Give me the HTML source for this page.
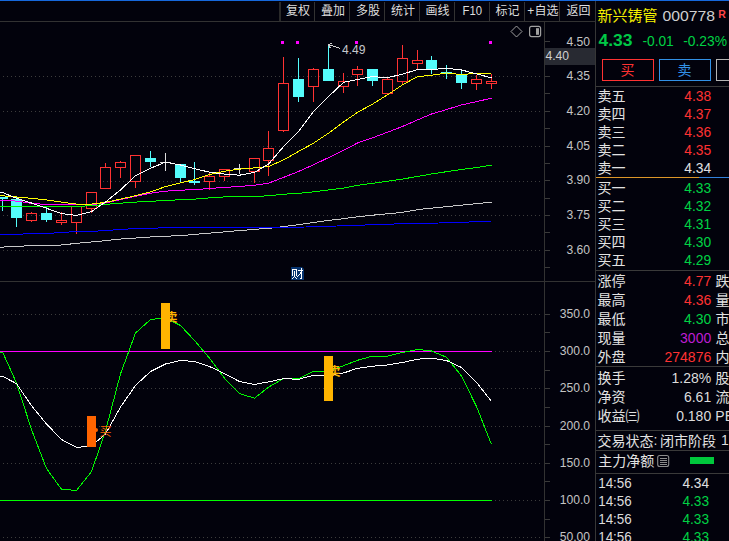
<!DOCTYPE html><html><head><meta charset="utf-8"><title>chart</title><style>html,body{margin:0;padding:0;background:#02020c;overflow:hidden}body{width:729px;height:541px;font-family:"Liberation Sans",sans-serif}</style></head><body><svg width="729" height="541" viewBox="0 0 729 541" font-family="'Liberation Sans', 'Noto Sans CJK SC', sans-serif" style="display:block"><defs><clipPath id="cpMain"><rect x="0" y="22" width="544" height="259"/></clipPath><clipPath id="cpInd"><rect x="0" y="282" width="544" height="259"/></clipPath></defs><rect width="729" height="541" fill="#02020c"/><rect x="0" y="0" width="729" height="1" fill="#1668dc"/>
<rect x="0" y="21" width="595" height="1" fill="#323232"/>
<rect x="279" y="2" width="2" height="19" fill="#2a2a2a"/>
<rect x="314" y="2" width="1" height="19" fill="#323232"/>
<rect x="349" y="2" width="1" height="19" fill="#323232"/>
<rect x="384" y="2" width="1" height="19" fill="#323232"/>
<rect x="419" y="2" width="1" height="19" fill="#323232"/>
<rect x="454" y="2" width="1" height="19" fill="#323232"/>
<rect x="489" y="2" width="1" height="19" fill="#323232"/>
<rect x="524" y="2" width="1" height="19" fill="#323232"/>
<rect x="559" y="2" width="1" height="19" fill="#323232"/>
<text x="286" y="15.3" font-size="12" fill="#dedede">复权</text>
<text x="321" y="15.3" font-size="12" fill="#dedede">叠加</text>
<text x="356" y="15.3" font-size="12" fill="#dedede">多股</text>
<text x="391" y="15.3" font-size="12" fill="#dedede">统计</text>
<text x="425.5" y="15.3" font-size="12" fill="#dedede">画线</text>
<text x="495.5" y="15.3" font-size="12" fill="#dedede">标记</text>
<text x="566.5" y="15.3" font-size="12" fill="#dedede">返回</text>
<text x="462.5" y="15.2" font-size="12" fill="#dedede" textLength="19.5" lengthAdjust="spacingAndGlyphs">F10</text>
<text x="527.3" y="15" font-size="12" fill="#dedede">+</text>
<text x="534.5" y="15.3" font-size="12" fill="#dedede">自选</text>
<rect x="544" y="21" width="1" height="520" fill="#323232"/>
<rect x="595" y="1" width="1" height="540" fill="#363636"/>
<rect x="0" y="281" width="595" height="1" fill="#323232"/>
<line x1="3" y1="76.5" x2="541" y2="76.5" stroke="#3c3c3c" stroke-width="1" stroke-dasharray="1 3" shape-rendering="crispEdges"/>
<line x1="3" y1="111.5" x2="541" y2="111.5" stroke="#3c3c3c" stroke-width="1" stroke-dasharray="1 3" shape-rendering="crispEdges"/>
<line x1="3" y1="146.5" x2="541" y2="146.5" stroke="#3c3c3c" stroke-width="1" stroke-dasharray="1 3" shape-rendering="crispEdges"/>
<line x1="3" y1="181.5" x2="541" y2="181.5" stroke="#3c3c3c" stroke-width="1" stroke-dasharray="1 3" shape-rendering="crispEdges"/>
<line x1="3" y1="215.5" x2="541" y2="215.5" stroke="#3c3c3c" stroke-width="1" stroke-dasharray="1 3" shape-rendering="crispEdges"/>
<line x1="3" y1="250.5" x2="541" y2="250.5" stroke="#3c3c3c" stroke-width="1" stroke-dasharray="1 3" shape-rendering="crispEdges"/>
<rect x="545" y="41" width="5" height="1" fill="#3a3a3a"/>
<rect x="545" y="76" width="5" height="1" fill="#3a3a3a"/>
<rect x="545" y="93" width="5" height="1" fill="#3a3a3a"/>
<rect x="545" y="111" width="5" height="1" fill="#3a3a3a"/>
<rect x="545" y="128" width="5" height="1" fill="#3a3a3a"/>
<rect x="545" y="146" width="5" height="1" fill="#3a3a3a"/>
<rect x="545" y="163" width="5" height="1" fill="#3a3a3a"/>
<rect x="545" y="180" width="5" height="1" fill="#3a3a3a"/>
<rect x="545" y="198" width="5" height="1" fill="#3a3a3a"/>
<rect x="545" y="215" width="5" height="1" fill="#3a3a3a"/>
<rect x="545" y="232" width="5" height="1" fill="#3a3a3a"/>
<rect x="545" y="250" width="5" height="1" fill="#3a3a3a"/>
<rect x="545" y="267" width="5" height="1" fill="#3a3a3a"/>
<text x="590" y="45.9" font-size="12.5" fill="#c4c4c4" text-anchor="end" textLength="23.6" lengthAdjust="spacingAndGlyphs">4.50</text>
<text x="590" y="80.1" font-size="12.5" fill="#c4c4c4" text-anchor="end" textLength="23.6" lengthAdjust="spacingAndGlyphs">4.35</text>
<text x="590" y="114.9" font-size="12.5" fill="#c4c4c4" text-anchor="end" textLength="23.6" lengthAdjust="spacingAndGlyphs">4.20</text>
<text x="590" y="149.6" font-size="12.5" fill="#c4c4c4" text-anchor="end" textLength="23.6" lengthAdjust="spacingAndGlyphs">4.05</text>
<text x="590" y="184.4" font-size="12.5" fill="#c4c4c4" text-anchor="end" textLength="23.6" lengthAdjust="spacingAndGlyphs">3.90</text>
<text x="590" y="219.1" font-size="12.5" fill="#c4c4c4" text-anchor="end" textLength="23.6" lengthAdjust="spacingAndGlyphs">3.75</text>
<text x="590" y="253.9" font-size="12.5" fill="#c4c4c4" text-anchor="end" textLength="23.6" lengthAdjust="spacingAndGlyphs">3.60</text>
<rect x="545" y="48" width="50" height="17" fill="#282a32"/>
<text x="545.5" y="60.2" font-size="12.5" fill="#d0d0d0" textLength="23.6" lengthAdjust="spacingAndGlyphs">4.40</text>
<g shape-rendering="crispEdges">
<rect x="2" y="197" width="1" height="14" fill="#54fcfc"/>
<rect x="-3" y="197" width="11" height="2" fill="#54fcfc"/>
<rect x="16" y="197" width="1" height="30" fill="#54fcfc"/>
<rect x="11" y="199" width="11" height="19" fill="#54fcfc"/>
<rect x="31" y="212" width="1" height="1" fill="#ff3232"/>
<rect x="31" y="221" width="1" height="1" fill="#ff3232"/>
<rect x="26.5" y="213.5" width="10" height="7" fill="none" stroke="#ff3232" stroke-width="1"/>
<rect x="46" y="207" width="1" height="15" fill="#54fcfc"/>
<rect x="41" y="213" width="11" height="7" fill="#54fcfc"/>
<rect x="61" y="212" width="1" height="8" fill="#ff3232"/>
<rect x="61" y="223" width="1" height="2" fill="#ff3232"/>
<rect x="56.5" y="220.5" width="10" height="2" fill="none" stroke="#ff3232" stroke-width="1"/>
<rect x="76" y="223" width="1" height="11" fill="#ff3232"/>
<rect x="71.5" y="206.5" width="10" height="16" fill="none" stroke="#ff3232" stroke-width="1"/>
<rect x="91" y="209" width="1" height="4" fill="#ff3232"/>
<rect x="86.5" y="192.5" width="10" height="16" fill="none" stroke="#ff3232" stroke-width="1"/>
<rect x="105" y="163" width="1" height="4" fill="#ff3232"/>
<rect x="100.5" y="167.5" width="10" height="21" fill="none" stroke="#ff3232" stroke-width="1"/>
<rect x="120" y="161" width="1" height="1" fill="#ff3232"/>
<rect x="120" y="168" width="1" height="10" fill="#ff3232"/>
<rect x="115.5" y="162.5" width="10" height="5" fill="none" stroke="#ff3232" stroke-width="1"/>
<rect x="135" y="182" width="1" height="6" fill="#ff3232"/>
<rect x="130.5" y="155.5" width="10" height="26" fill="none" stroke="#ff3232" stroke-width="1"/>
<rect x="150" y="151" width="1" height="16" fill="#54fcfc"/>
<rect x="145" y="158" width="11" height="4" fill="#54fcfc"/>
<rect x="165" y="153" width="1" height="18" fill="#dcdcdc"/>
<rect x="160" y="162" width="11" height="1" fill="#dcdcdc"/>
<rect x="180" y="164" width="1" height="19" fill="#54fcfc"/>
<rect x="175" y="164" width="11" height="14" fill="#54fcfc"/>
<rect x="194" y="162" width="1" height="23" fill="#54fcfc"/>
<rect x="189" y="181" width="11" height="2" fill="#54fcfc"/>
<rect x="209" y="173" width="1" height="3" fill="#ff3232"/>
<rect x="209" y="182" width="1" height="8" fill="#ff3232"/>
<rect x="204.5" y="176.5" width="10" height="5" fill="none" stroke="#ff3232" stroke-width="1"/>
<rect x="224" y="177" width="1" height="4" fill="#ff3232"/>
<rect x="219.5" y="169.5" width="10" height="7" fill="none" stroke="#ff3232" stroke-width="1"/>
<rect x="239" y="164" width="1" height="10" fill="#dcdcdc"/>
<rect x="234" y="168" width="11" height="1" fill="#dcdcdc"/>
<rect x="254" y="172" width="1" height="11" fill="#ff3232"/>
<rect x="249.5" y="158.5" width="10" height="13" fill="none" stroke="#ff3232" stroke-width="1"/>
<rect x="268" y="131" width="1" height="17" fill="#ff3232"/>
<rect x="268" y="161" width="1" height="15" fill="#ff3232"/>
<rect x="263.5" y="148.5" width="10" height="12" fill="none" stroke="#ff3232" stroke-width="1"/>
<rect x="283" y="57" width="1" height="26" fill="#ff3232"/>
<rect x="283" y="131" width="1" height="1" fill="#ff3232"/>
<rect x="278.5" y="83.5" width="10" height="47" fill="none" stroke="#ff3232" stroke-width="1"/>
<rect x="298" y="58" width="1" height="44" fill="#54fcfc"/>
<rect x="293" y="79" width="11" height="18" fill="#54fcfc"/>
<rect x="313" y="68" width="1" height="1" fill="#ff3232"/>
<rect x="313" y="87" width="1" height="15" fill="#ff3232"/>
<rect x="308.5" y="69.5" width="10" height="17" fill="none" stroke="#ff3232" stroke-width="1"/>
<rect x="328" y="44" width="1" height="37" fill="#54fcfc"/>
<rect x="323" y="69" width="11" height="12" fill="#54fcfc"/>
<rect x="343" y="73" width="1" height="8" fill="#ff3232"/>
<rect x="343" y="87" width="1" height="6" fill="#ff3232"/>
<rect x="338.5" y="81.5" width="10" height="5" fill="none" stroke="#ff3232" stroke-width="1"/>
<rect x="357" y="66" width="1" height="3" fill="#ff3232"/>
<rect x="357" y="75" width="1" height="11" fill="#ff3232"/>
<rect x="352.5" y="69.5" width="10" height="5" fill="none" stroke="#ff3232" stroke-width="1"/>
<rect x="372" y="69" width="1" height="17" fill="#54fcfc"/>
<rect x="367" y="69" width="11" height="12" fill="#54fcfc"/>
<rect x="387" y="77" width="1" height="2" fill="#ff3232"/>
<rect x="382.5" y="79.5" width="10" height="14" fill="none" stroke="#ff3232" stroke-width="1"/>
<rect x="402" y="45" width="1" height="13" fill="#ff3232"/>
<rect x="402" y="82" width="1" height="3" fill="#ff3232"/>
<rect x="397.5" y="58.5" width="10" height="23" fill="none" stroke="#ff3232" stroke-width="1"/>
<rect x="417" y="50" width="1" height="10" fill="#ff3232"/>
<rect x="417" y="64" width="1" height="5" fill="#ff3232"/>
<rect x="412.5" y="60.5" width="10" height="3" fill="none" stroke="#ff3232" stroke-width="1"/>
<rect x="431" y="56" width="1" height="18" fill="#54fcfc"/>
<rect x="426" y="60" width="11" height="9" fill="#54fcfc"/>
<rect x="446" y="65" width="1" height="14" fill="#54fcfc"/>
<rect x="441" y="72" width="11" height="1" fill="#54fcfc"/>
<rect x="461" y="70" width="1" height="19" fill="#54fcfc"/>
<rect x="456" y="74" width="11" height="9" fill="#54fcfc"/>
<rect x="476" y="75" width="1" height="4" fill="#ff3232"/>
<rect x="476" y="84" width="1" height="6" fill="#ff3232"/>
<rect x="471.5" y="79.5" width="10" height="4" fill="none" stroke="#ff3232" stroke-width="1"/>
<rect x="491" y="74" width="1" height="7" fill="#ff3232"/>
<rect x="491" y="84" width="1" height="5" fill="#ff3232"/>
<rect x="486.5" y="81.5" width="10" height="2" fill="none" stroke="#ff3232" stroke-width="1"/>
</g>
<g clip-path="url(#cpMain)">
<polyline points="0.0,247.4 9.0,246.6 24.0,246.0 65.0,244.9 73.0,243.6 86.5,242.4 100.0,241.2 120.0,239.1 150.0,237.0 182.0,235.5 232.0,231.2 272.0,228.0 300.0,224.5 320.3,221.5 340.7,219.0 361.0,216.4 381.3,214.3 401.6,212.5 420.3,209.3 440.7,207.2 461.0,205.2 481.3,203.2 491.5,202.2" fill="none" stroke="#c8c8c8" stroke-width="1" stroke-linejoin="round" shape-rendering="crispEdges"/>
<polyline points="0.0,234.6 23.3,234.0 54.0,233.0 69.0,232.0 98.0,231.0 113.3,230.0 128.3,229.0 158.2,228.0 306.0,227.0 336.6,226.0 365.0,225.0 394.5,224.0 438.6,223.0 469.1,222.0 491.5,221.6" fill="none" stroke="#0000ff" stroke-width="1" stroke-linejoin="round" shape-rendering="crispEdges"/>
<polyline points="0.0,206.3 2.5,206.3 16.5,206.3 31.5,206.3 46.5,206.3 61.5,206.3 76.5,206.3 91.5,205.8 105.5,204.4 120.5,203.2 135.5,202.1 150.5,201.2 165.5,200.7 180.5,199.6 194.5,199.1 209.5,197.9 224.5,196.9 239.5,196.7 254.5,196.5 268.5,195.8 283.5,194.2 298.5,193.4 313.5,191.8 328.5,190.0 343.5,188.1 357.5,185.4 372.5,183.3 387.5,181.3 402.5,179.1 417.5,176.4 431.5,174.0 446.5,171.7 461.5,169.5 476.5,167.6 491.5,165.2" fill="none" stroke="#00fa00" stroke-width="1" stroke-linejoin="round" shape-rendering="crispEdges"/>
<polyline points="0.0,200.3 2.5,200.3 16.5,201.1 31.5,203.3 46.5,204.5 61.5,204.8 76.5,204.8 91.5,204.6 105.5,203.0 120.5,199.6 135.5,196.2 150.5,193.2 165.5,191.2 180.5,190.2 194.5,189.6 209.5,188.5 224.5,187.4 239.5,186.5 254.5,185.2 268.5,183.2 283.5,177.4 298.5,171.5 313.5,164.8 328.5,157.6 343.5,150.3 357.5,143.0 372.5,137.8 387.5,132.2 402.5,126.5 417.5,119.9 431.5,114.0 446.5,109.6 461.5,104.9 476.5,101.6 491.5,98.2" fill="none" stroke="#ff00ff" stroke-width="1" stroke-linejoin="round" shape-rendering="crispEdges"/>
<polyline points="0.0,195.8 2.5,195.8 16.5,197.0 31.5,198.3 46.5,200.0 61.5,202.1 76.5,204.1 91.5,204.1 105.5,202.4 120.5,199.1 135.5,195.7 150.5,191.9 165.5,186.6 180.5,182.9 194.5,179.6 209.5,174.5 224.5,171.2 239.5,169.1 254.5,167.9 268.5,166.6 283.5,159.9 298.5,151.5 313.5,143.2 328.5,133.2 343.5,122.0 357.5,112.4 372.5,104.1 387.5,94.8 402.5,84.9 417.5,76.6 431.5,75.3 446.5,73.0 461.5,74.6 476.5,73.3 491.5,73.6" fill="none" stroke="#ffff00" stroke-width="1" stroke-linejoin="round" shape-rendering="crispEdges"/>
<polyline points="0.0,192.5 2.5,192.5 16.5,198.3 31.5,203.0 46.5,208.3 61.5,213.6 76.5,215.4 91.5,211.6 105.5,202.0 120.5,189.9 135.5,175.8 150.5,168.3 165.5,162.1 180.5,165.0 194.5,168.6 209.5,172.2 224.5,174.1 239.5,175.2 254.5,172.4 268.5,164.1 283.5,146.6 298.5,131.5 313.5,111.6 328.5,96.6 343.5,82.4 357.5,79.6 372.5,76.6 387.5,77.7 402.5,74.1 417.5,69.6 431.5,69.5 446.5,68.3 461.5,70.0 476.5,73.8 491.5,77.9" fill="none" stroke="#ffffff" stroke-width="1" stroke-linejoin="round" shape-rendering="crispEdges"/>
</g>
<rect x="281" y="41" width="3" height="3" fill="#ff00ff"/>
<rect x="296" y="41" width="3" height="3" fill="#ff00ff"/>
<rect x="355" y="41" width="3" height="3" fill="#ff00ff"/>
<rect x="489" y="41" width="3" height="3" fill="#ff00ff"/>
<path d="M328.5,44.5 L340.5,48.5 M328.5,44.5 L332,43.5 M328.5,44.5 L330.5,48.5" stroke="#d0d0d0" stroke-width="1" fill="none" shape-rendering="crispEdges"/>
<text x="342" y="53.9" font-size="12.5" fill="#c4c8cc" textLength="23.6" lengthAdjust="spacingAndGlyphs">4.49</text>
<path d="M516.5,26 L522,31.5 L516.5,37 L511,31.5 Z" fill="none" stroke="#a0a0a0" stroke-width="1"/>
<rect x="529.6" y="26.4" width="11" height="10.2" rx="2" fill="none" stroke="#a0a0a0" stroke-width="1.2"/>
<rect x="536" y="28.2" width="3" height="6.6" fill="#a0a0a0"/>
<path d="M291,267 H302 L304,269 V280 H291 Z" fill="#07346f"/>
<g fill="#ffffff" shape-rendering="crispEdges"><rect x="292" y="269" width="1" height="1"/><rect x="292" y="270" width="1" height="1"/><rect x="292" y="271" width="1" height="1"/><rect x="292" y="272" width="1" height="1"/><rect x="292" y="273" width="1" height="1"/><rect x="292" y="274" width="1" height="1"/><rect x="292" y="275" width="1" height="1"/><rect x="292" y="278" width="1" height="1"/><rect x="293" y="269" width="1" height="1"/><rect x="293" y="277" width="1" height="1"/><rect x="294" y="269" width="1" height="1"/><rect x="294" y="271" width="1" height="1"/><rect x="294" y="272" width="1" height="1"/><rect x="294" y="273" width="1" height="1"/><rect x="294" y="274" width="1" height="1"/><rect x="294" y="275" width="1" height="1"/><rect x="294" y="276" width="1" height="1"/><rect x="295" y="269" width="1" height="1"/><rect x="295" y="277" width="1" height="1"/><rect x="296" y="269" width="1" height="1"/><rect x="296" y="270" width="1" height="1"/><rect x="296" y="271" width="1" height="1"/><rect x="296" y="272" width="1" height="1"/><rect x="296" y="273" width="1" height="1"/><rect x="296" y="274" width="1" height="1"/><rect x="296" y="275" width="1" height="1"/><rect x="296" y="278" width="1" height="1"/><rect x="297" y="276" width="1" height="1"/><rect x="298" y="270" width="1" height="1"/><rect x="298" y="275" width="1" height="1"/><rect x="299" y="270" width="1" height="1"/><rect x="299" y="274" width="1" height="1"/><rect x="300" y="270" width="1" height="1"/><rect x="300" y="272" width="1" height="1"/><rect x="300" y="273" width="1" height="1"/><rect x="300" y="278" width="1" height="1"/><rect x="301" y="268" width="1" height="1"/><rect x="301" y="269" width="1" height="1"/><rect x="301" y="270" width="1" height="1"/><rect x="301" y="271" width="1" height="1"/><rect x="301" y="272" width="1" height="1"/><rect x="301" y="273" width="1" height="1"/><rect x="301" y="274" width="1" height="1"/><rect x="301" y="275" width="1" height="1"/><rect x="301" y="276" width="1" height="1"/><rect x="301" y="277" width="1" height="1"/><rect x="301" y="278" width="1" height="1"/><rect x="302" y="270" width="1" height="1"/></g>
<line x1="3" y1="314.5" x2="541" y2="314.5" stroke="#3c3c3c" stroke-width="1" stroke-dasharray="1 3" shape-rendering="crispEdges"/>
<line x1="3" y1="351.5" x2="541" y2="351.5" stroke="#3c3c3c" stroke-width="1" stroke-dasharray="1 3" shape-rendering="crispEdges"/>
<line x1="3" y1="388.5" x2="541" y2="388.5" stroke="#3c3c3c" stroke-width="1" stroke-dasharray="1 3" shape-rendering="crispEdges"/>
<line x1="3" y1="426.5" x2="541" y2="426.5" stroke="#3c3c3c" stroke-width="1" stroke-dasharray="1 3" shape-rendering="crispEdges"/>
<line x1="3" y1="463.5" x2="541" y2="463.5" stroke="#3c3c3c" stroke-width="1" stroke-dasharray="1 3" shape-rendering="crispEdges"/>
<line x1="3" y1="500.5" x2="541" y2="500.5" stroke="#3c3c3c" stroke-width="1" stroke-dasharray="1 3" shape-rendering="crispEdges"/>
<line x1="3" y1="537.5" x2="541" y2="537.5" stroke="#3c3c3c" stroke-width="1" stroke-dasharray="1 3" shape-rendering="crispEdges"/>
<text x="590" y="317.9" font-size="12.5" fill="#c4c4c4" text-anchor="end" textLength="30.3" lengthAdjust="spacingAndGlyphs">350.0</text>
<text x="590" y="355.1" font-size="12.5" fill="#c4c4c4" text-anchor="end" textLength="30.3" lengthAdjust="spacingAndGlyphs">300.0</text>
<text x="590" y="392.4" font-size="12.5" fill="#c4c4c4" text-anchor="end" textLength="30.3" lengthAdjust="spacingAndGlyphs">250.0</text>
<text x="590" y="429.6" font-size="12.5" fill="#c4c4c4" text-anchor="end" textLength="30.3" lengthAdjust="spacingAndGlyphs">200.0</text>
<text x="590" y="466.9" font-size="12.5" fill="#c4c4c4" text-anchor="end" textLength="30.3" lengthAdjust="spacingAndGlyphs">150.0</text>
<text x="590" y="504.1" font-size="12.5" fill="#c4c4c4" text-anchor="end" textLength="30.3" lengthAdjust="spacingAndGlyphs">100.0</text>
<text x="590" y="541.4" font-size="12.5" fill="#c4c4c4" text-anchor="end" textLength="30.3" lengthAdjust="spacingAndGlyphs">50.00</text>
<rect x="545" y="314" width="5" height="1" fill="#3a3a3a"/>
<rect x="545" y="332" width="5" height="1" fill="#3a3a3a"/>
<rect x="545" y="351" width="5" height="1" fill="#3a3a3a"/>
<rect x="545" y="370" width="5" height="1" fill="#3a3a3a"/>
<rect x="545" y="388" width="5" height="1" fill="#3a3a3a"/>
<rect x="545" y="407" width="5" height="1" fill="#3a3a3a"/>
<rect x="545" y="426" width="5" height="1" fill="#3a3a3a"/>
<rect x="545" y="444" width="5" height="1" fill="#3a3a3a"/>
<rect x="545" y="463" width="5" height="1" fill="#3a3a3a"/>
<rect x="545" y="481" width="5" height="1" fill="#3a3a3a"/>
<rect x="545" y="500" width="5" height="1" fill="#3a3a3a"/>
<rect x="545" y="519" width="5" height="1" fill="#3a3a3a"/>
<rect x="545" y="537" width="5" height="1" fill="#3a3a3a"/>
<rect x="0" y="351" width="492" height="1" fill="#ff00ff"/>
<rect x="0" y="500" width="492" height="1" fill="#00ff00"/>
<g clip-path="url(#cpInd)">
<polyline points="0.0,352.0 2.5,352.0 16.5,382.9 31.5,429.5 46.5,468.5 61.5,489.3 76.5,490.4 91.5,471.6 105.5,431.0 120.5,374.0 135.5,333.0 150.5,319.5 165.5,318.0 180.5,325.5 194.5,340.5 209.5,358.2 224.5,378.3 239.5,393.6 254.5,398.2 268.5,387.2 283.5,378.6 298.5,378.6 313.5,371.3 328.5,371.3 343.5,365.7 357.5,360.3 372.5,356.1 387.5,356.1 402.5,352.5 417.5,349.4 431.5,351.0 446.5,357.3 461.5,376.0 476.5,406.5 491.5,444.5" fill="none" stroke="#00fa00" stroke-width="1" stroke-linejoin="round" shape-rendering="crispEdges"/>
<polyline points="0.0,376.1 2.5,376.3 16.5,383.6 31.5,405.7 46.5,424.0 61.5,439.5 76.5,447.4 91.5,446.0 105.5,434.0 120.5,407.0 135.5,385.5 150.5,371.5 165.5,364.0 180.5,360.4 194.5,361.5 209.5,366.5 224.5,373.6 239.5,381.6 254.5,384.4 268.5,381.9 283.5,378.6 298.5,379.3 313.5,375.3 328.5,375.0 343.5,373.0 357.5,368.3 372.5,366.2 387.5,365.0 402.5,362.5 417.5,359.2 431.5,358.2 446.5,360.5 461.5,367.5 476.5,382.3 491.5,401.5" fill="none" stroke="#ffffff" stroke-width="1" stroke-linejoin="round" shape-rendering="crispEdges"/>
</g>
<text x="165.6" y="321.8" font-size="12" fill="#ffb400" font-weight="bold">卖</text>
<text x="328.6" y="375.5" font-size="12" fill="#ffb400" font-weight="bold">卖</text>
<rect x="161" y="303" width="9" height="46" fill="#ffb400"/>
<rect x="324" y="356" width="9" height="45" fill="#ffb400"/>
<rect x="87" y="416" width="9" height="31" fill="#ff6400"/>
<circle cx="96" cy="430" r="2" fill="#ff6400"/>
<text x="99.6" y="435.6" font-size="12" fill="#ff6400">买</text>
<text x="597.6" y="21.3" font-size="15" fill="#f4f000">新兴铸管</text>
<text x="662.5" y="20.7" font-size="15" fill="#d0d0d0" textLength="52.5" lengthAdjust="spacingAndGlyphs">000778</text>
<text x="718.3" y="17.9" font-size="10.5" fill="#ff4646" font-weight="bold">R</text>
<text x="598.5" y="46" font-size="17" fill="#00c846" font-weight="bold" textLength="34" lengthAdjust="spacingAndGlyphs">4.33</text>
<text x="642.4" y="45.7" font-size="14" fill="#00d244" textLength="31.4" lengthAdjust="spacingAndGlyphs">-0.01</text>
<text x="683.2" y="45.7" font-size="14" fill="#00d244" textLength="43.8" lengthAdjust="spacingAndGlyphs">-0.23%</text>
<rect x="602.5" y="59.5" width="51" height="21" fill="none" stroke="#ff3232" stroke-width="1"/>
<rect x="659.5" y="59.5" width="51" height="21" fill="none" stroke="#3291e6" stroke-width="1"/>
<rect x="716.5" y="59.5" width="20" height="21" fill="none" stroke="#b4b4b4" stroke-width="1"/>
<text x="620.5" y="75.3" font-size="14" fill="#ff3232">买</text>
<text x="677.5" y="75.3" font-size="14" fill="#3291e6">卖</text>
<rect x="596" y="86" width="133" height="1" fill="#3a3a3a"/>
<text x="597.6" y="101.4" font-size="14" fill="#e2e2e2">卖五</text>
<text x="711.2" y="100.9" font-size="14" fill="#ff3232" text-anchor="end" textLength="26.9" lengthAdjust="spacingAndGlyphs">4.38</text>
<text x="597.6" y="119.4" font-size="14" fill="#e2e2e2">卖四</text>
<text x="711.2" y="118.9" font-size="14" fill="#ff3232" text-anchor="end" textLength="26.9" lengthAdjust="spacingAndGlyphs">4.37</text>
<text x="597.6" y="137.4" font-size="14" fill="#e2e2e2">卖三</text>
<text x="711.2" y="136.9" font-size="14" fill="#ff3232" text-anchor="end" textLength="26.9" lengthAdjust="spacingAndGlyphs">4.36</text>
<text x="597.6" y="155.4" font-size="14" fill="#e2e2e2">卖二</text>
<text x="711.2" y="154.9" font-size="14" fill="#ff3232" text-anchor="end" textLength="26.9" lengthAdjust="spacingAndGlyphs">4.35</text>
<text x="597.6" y="173.4" font-size="14" fill="#e2e2e2">卖一</text>
<text x="711.2" y="172.9" font-size="14" fill="#e0e0e0" text-anchor="end" textLength="26.9" lengthAdjust="spacingAndGlyphs">4.34</text>
<rect x="596" y="177" width="103" height="1" fill="#dc9628"/>
<rect x="699" y="177" width="30" height="1" fill="#3282dc"/>
<text x="597.6" y="193.3" font-size="14" fill="#e2e2e2">买一</text>
<text x="711.2" y="192.8" font-size="14" fill="#00d244" text-anchor="end" textLength="26.9" lengthAdjust="spacingAndGlyphs">4.33</text>
<text x="597.6" y="211.3" font-size="14" fill="#e2e2e2">买二</text>
<text x="711.2" y="210.8" font-size="14" fill="#00d244" text-anchor="end" textLength="26.9" lengthAdjust="spacingAndGlyphs">4.32</text>
<text x="597.6" y="229.3" font-size="14" fill="#e2e2e2">买三</text>
<text x="711.2" y="228.8" font-size="14" fill="#00d244" text-anchor="end" textLength="26.9" lengthAdjust="spacingAndGlyphs">4.31</text>
<text x="597.6" y="247.3" font-size="14" fill="#e2e2e2">买四</text>
<text x="711.2" y="246.8" font-size="14" fill="#00d244" text-anchor="end" textLength="26.9" lengthAdjust="spacingAndGlyphs">4.30</text>
<text x="597.6" y="265.3" font-size="14" fill="#e2e2e2">买五</text>
<text x="711.2" y="264.8" font-size="14" fill="#00d244" text-anchor="end" textLength="26.9" lengthAdjust="spacingAndGlyphs">4.29</text>
<rect x="596" y="270" width="133" height="1" fill="#3a3a3a"/>
<text x="597.6" y="286.2" font-size="14" fill="#e2e2e2">涨停</text>
<text x="711.2" y="285.7" font-size="14" fill="#ff3232" text-anchor="end" textLength="27.2" lengthAdjust="spacingAndGlyphs">4.77</text>
<text x="715.5" y="286.2" font-size="14" fill="#e2e2e2">跌</text>
<text x="597.6" y="305.2" font-size="14" fill="#e2e2e2">最高</text>
<text x="711.2" y="304.7" font-size="14" fill="#ff3232" text-anchor="end" textLength="27.2" lengthAdjust="spacingAndGlyphs">4.36</text>
<text x="715.5" y="305.2" font-size="14" fill="#e2e2e2">量</text>
<text x="597.6" y="324.2" font-size="14" fill="#e2e2e2">最低</text>
<text x="711.2" y="323.7" font-size="14" fill="#00d244" text-anchor="end" textLength="27.2" lengthAdjust="spacingAndGlyphs">4.30</text>
<text x="715.5" y="324.2" font-size="14" fill="#e2e2e2">市</text>
<text x="597.6" y="343.2" font-size="14" fill="#e2e2e2">现量</text>
<text x="711.2" y="342.7" font-size="14" fill="#be1ed2" text-anchor="end" textLength="31.1" lengthAdjust="spacingAndGlyphs">3000</text>
<text x="715.5" y="343.2" font-size="14" fill="#e2e2e2">总</text>
<text x="597.6" y="362.2" font-size="14" fill="#e2e2e2">外盘</text>
<text x="711.2" y="361.7" font-size="14" fill="#ff3232" text-anchor="end" textLength="46.7" lengthAdjust="spacingAndGlyphs">274876</text>
<text x="715.5" y="362.2" font-size="14" fill="#e2e2e2">内</text>
<rect x="596" y="366" width="133" height="1" fill="#3a3a3a"/>
<text x="597.6" y="383.4" font-size="14" fill="#e2e2e2">换手</text>
<text x="711.2" y="382.9" font-size="14" fill="#dcdcdc" text-anchor="end">1.28%</text>
<text x="715.5" y="383.4" font-size="14" fill="#e2e2e2">股</text>
<text x="597.6" y="402.2" font-size="14" fill="#e2e2e2">净资</text>
<text x="711.2" y="401.7" font-size="14" fill="#dcdcdc" text-anchor="end">6.61</text>
<text x="715.5" y="402.2" font-size="14" fill="#e2e2e2">流</text>
<text x="597.6" y="421" font-size="14" fill="#e2e2e2">收益㈢</text>
<text x="711.2" y="420.5" font-size="14" fill="#dcdcdc" text-anchor="end">0.180</text>
<text x="715.3" y="420.5" font-size="14" fill="#dcdcdc">PE</text>
<rect x="596" y="430" width="133" height="1" fill="#3a3a3a"/>
<text x="597.6" y="445.6" font-size="14" fill="#e2e2e2">交易状态</text>
<text x="653.5" y="445" font-size="14" fill="#dcdcdc">:</text>
<text x="660" y="445.6" font-size="14" fill="#e2e2e2">闭市阶段</text>
<text x="721" y="445.2" font-size="14" fill="#dcdcdc">1</text>
<rect x="596" y="450" width="133" height="1" fill="#3a3a3a"/>
<text x="598.2" y="466" font-size="14" fill="#e2e2e2">主力净额</text>
<rect x="657.7" y="455.5" width="11" height="11" rx="2" fill="none" stroke="#8c8c8c" stroke-width="1.1"/>
<rect x="660" y="458" width="7" height="1" fill="#8c8c8c"/>
<rect x="660" y="460" width="7" height="1" fill="#8c8c8c"/>
<rect x="660" y="462" width="7" height="1" fill="#8c8c8c"/>
<rect x="660" y="464" width="7" height="1" fill="#8c8c8c"/>
<rect x="690" y="457" width="24" height="7" fill="#00c83c"/>
<rect x="596" y="473" width="133" height="1" fill="#3a3a3a"/>
<text x="598.2" y="487.6" font-size="14" fill="#dcdcdc" textLength="33.6" lengthAdjust="spacingAndGlyphs">14:56</text>
<text x="709" y="487.6" font-size="14" fill="#e0e0e0" text-anchor="end" textLength="26.6" lengthAdjust="spacingAndGlyphs">4.34</text>
<text x="598.2" y="505.7" font-size="14" fill="#dcdcdc" textLength="33.6" lengthAdjust="spacingAndGlyphs">14:56</text>
<text x="709" y="505.7" font-size="14" fill="#00d244" text-anchor="end" textLength="26.6" lengthAdjust="spacingAndGlyphs">4.33</text>
<text x="598.2" y="523.8" font-size="14" fill="#dcdcdc" textLength="33.6" lengthAdjust="spacingAndGlyphs">14:56</text>
<text x="709" y="523.8" font-size="14" fill="#00d244" text-anchor="end" textLength="26.6" lengthAdjust="spacingAndGlyphs">4.33</text>
<text x="598.2" y="541.9" font-size="14" fill="#dcdcdc" textLength="33.6" lengthAdjust="spacingAndGlyphs">14:56</text>
<text x="709" y="541.9" font-size="14" fill="#00d244" text-anchor="end" textLength="26.6" lengthAdjust="spacingAndGlyphs">4.33</text></svg></body></html>
